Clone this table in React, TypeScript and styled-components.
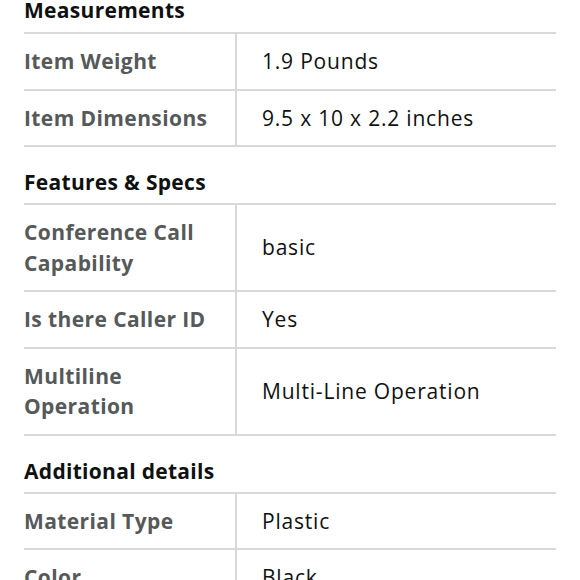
import React from 'react';
import styled, { createGlobalStyle } from 'styled-components';

type Row = { label: string; value: string };
type Section = { title: string; rows: Row[] };

const sections: Section[] = [
  {
    title: 'Measurements',
    rows: [
      { label: 'Item Weight', value: '1.9 Pounds' },
      { label: 'Item Dimensions', value: '9.5 x 10 x 2.2 inches' }
    ]
  },
  {
    title: 'Features & Specs',
    rows: [
      { label: 'Conference Call Capability', value: 'basic' },
      { label: 'Is there Caller ID', value: 'Yes' },
      { label: 'Multiline Operation', value: 'Multi-Line Operation' }
    ]
  },
  {
    title: 'Additional details',
    rows: [
      { label: 'Material Type', value: 'Plastic' },
      { label: 'Color', value: 'Black' }
    ]
  }
];

const GlobalStyle = createGlobalStyle`
  html, body {
    margin: 0;
    background: #fff;
    overflow: hidden;
  }
  body {
    font-family: 'Open Sans', 'Noto Sans', sans-serif;
    -webkit-font-smoothing: antialiased;
  }
`;

const Page = styled.div`
  padding: 0 24px;
  width: 580px;
  box-sizing: border-box;
`;

const Title = styled.h3<{ $first?: boolean }>`
  margin: 0;
  padding: ${p => (p.$first ? '0 0 8px' : '21px 0 7px')};
  margin-top: ${p => (p.$first ? '-4px' : '0')};
  font-size: 21px;
  line-height: 28px;
  font-weight: 700;
  letter-spacing: 0.3px;
  color: #0f1111;
`;

const Table = styled.div`
  border-top: 2px solid #d9d9d9;
`;

const TableRow = styled.div`
  display: grid;
  grid-template-columns: 213px 1fr;
  border-bottom: 2px solid #d9d9d9;
`;

const Label = styled.div`
  display: flex;
  align-items: center;
  padding: 12px 16px 12px 0;
  border-right: 2px solid #d9d9d9;
  font-size: 21px;
  line-height: 30.5px;
  font-weight: 700;
  letter-spacing: 0.4px;
  color: #565959;
`;

const Value = styled.div`
  display: flex;
  align-items: center;
  padding: 12px 0 12px 25px;
  font-size: 21px;
  line-height: 30.5px;
  letter-spacing: 0.8px;
  color: #0f1111;
`;

const App = () => (
  <Page>
    <GlobalStyle />
    {sections.map((s, i) => (
      <section key={s.title}>
        <Title $first={i === 0}>{s.title}</Title>
        <Table>
          {s.rows.map(r => (
            <TableRow key={r.label}>
              <Label>{r.label}</Label>
              <Value>{r.value}</Value>
            </TableRow>
          ))}
        </Table>
      </section>
    ))}
  </Page>
);

export default App;
